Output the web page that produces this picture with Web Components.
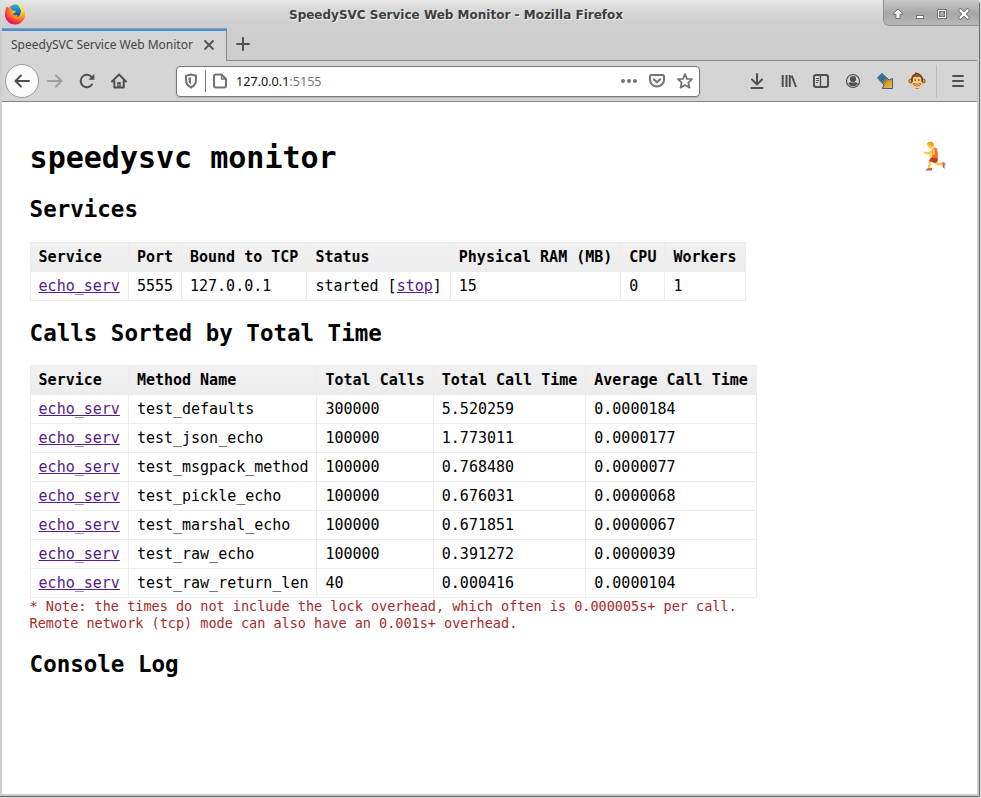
<!DOCTYPE html>
<html lang="en"><head><meta charset="utf-8"><title>SpeedySVC Service Web Monitor</title>
<style>html,body{margin:0;width:981px;height:798px;overflow:hidden;background:#fff}</style></head>
<body><browser-window></browser-window>
<script>
const define=(name,html)=>{const t=document.createElement('template');t.innerHTML=html;
customElements.define(name,class extends HTMLElement{constructor(){super();this.attachShadow({mode:'open'}).append(t.content.cloneNode(true));}});};

const S='fill="none" stroke="#4f4f4f" stroke-width="2" stroke-linecap="round" stroke-linejoin="round"';
const T='fill="none" stroke="#737373" stroke-width="2" stroke-linecap="round" stroke-linejoin="round"';
const icons={
firefox:[22,`<defs><radialGradient id="a" cx=".75" cy=".15" r=".95"><stop offset="0" stop-color="#fff44f"/><stop offset=".35" stop-color="#ffc21c"/><stop offset=".6" stop-color="#ff7a20"/><stop offset=".85" stop-color="#f5224f"/><stop offset="1" stop-color="#d8156b"/></radialGradient><linearGradient id="b" x2="0" y2="1"><stop stop-color="#21b5f5"/><stop offset="1" stop-color="#123fae"/></linearGradient></defs><path d="M2.5 3.5 4.5 5Q7 1 12 1Q20.700 2 21 11A10 10 0 0 1 1 12Q1 7 2.500 3.500Z" fill="url(#a)"/><path d="M7 3.500Q11 0 15 3Q18 6 16.500 10.500Q15 14.500 11 14.500Q6.500 14 6 9Z" fill="url(#b)"/><path d="M2.500 4Q4 6 7 5.500L8.500 7.500 12 8Q11.500 10 9 10.500 9 13 13 12 14 12 13 14Q10 17 6 14 8 18 12 17.500 16.500 16.500 17.500 11 18 6 14 3 21 5 20.800 12 19 21 11 21 3 20 1.300 13Z" fill="url(#a)"/>`],
close:[12,`<path d="M2 2 10 10M10 2 2 10" fill="none" stroke="#555" stroke-width="1.900" stroke-linecap="round"/>`],
plus:[14,`<path d="M7 1V13M1 7H13" ${S}/>`],
back:[16,`<path d="M15 8H1.500M7 2.500 1.500 8 7 13.500" ${S}/>`],
forward:[16,`<path d="M1 8H14.500M9 2.500 14.500 8 9 13.500" fill="none" stroke="#9d9d9d" stroke-width="2" stroke-linecap="round" stroke-linejoin="round"/>`],
reload:[16,`<path d="M13 11.500A6.200 6.200 0 1 1 12.700 4.200" ${S}/><path d="M15.400.8V6.700H9.500Z" fill="#4f4f4f"/>`],
home:[16,`<path d="M1 8.500 8 1.500 15 8.500M3.300 8V14.500H12.700V8" ${S}/><path d="M6.300 14V9H9.700V14Z" fill="#4f4f4f"/><circle cx="8" cy="12" r=".7" fill="#ddd"/>`],
shield:[16,`<path d="M8 1.500 13 2.700V7Q13 12 8 14.500 3 12 3 7V2.700Z" ${T}/><path d="M8 4.300V11.600Q5.500 10 5.500 7V4.800Z" fill="#737373"/>`],
page:[16,`<path d="M9.500 1.500H4Q2 1.500 2 3.500V12.500Q2 14.500 4 14.500H12Q14 14.500 14 12.500V6Z" ${T}/><path d="M9.500 1.800V6H14" ${T} style="stroke-width:1.400"/>`],
dots:[16,`<g fill="#737373"><circle cx="2" cy="8" r="2"/><circle cx="8" cy="8" r="2"/><circle cx="14" cy="8" r="2"/></g>`],
pocket:[16,`<path d="M2.500 2H13.500Q15 2 15 3.500V7A7 6.500 0 0 1 1 7V3.500Q1 2 2.500 2Z" ${T}/><path d="M4.800 6.200 8 9.200 11.200 6.200" ${T}/>`],
star:[16,`<path d="M8 1.200 10 5.800 15 6.200 11.300 9.600 12.500 14.600 8 12 3.500 14.600 4.700 9.600 1 6.200 6 5.800Z" ${T} style="stroke-width:1.800"/>`],
download:[16,`<path d="M8 1V11M3 6.500 8 11.500 13 6.500M2.500 15H13.500" ${S}/>`],
library:[16,`<path d="M1.700 2V14M5.500 2V14M8.800 2V14M10.700 2.700 15 14" ${S} style="stroke-linecap:butt"/>`],
sidebar:[16,`<rect x="1" y="2" width="14" height="12" rx="2" ${S}/><path d="M7.500 2V14" ${S} style="stroke-width:1.400"/><path d="M3 5.500H6M3 7.500H6M3 9.500H5" stroke="#4f4f4f"/>`],
account:[16,`<circle cx="8" cy="8" r="6.500" fill="none" stroke="#4f4f4f" stroke-width="1.200"/><circle cx="8" cy="6" r="3.100" fill="#4f4f4f"/><path d="M3.200 10.500Q5 8.700 6.500 9.500H9.500Q11 8.700 12.800 10.500 11 13.300 8 13.300 5 13.300 3.200 10.500Z" fill="#4f4f4f"/>`],
arrow:[18,`<defs><linearGradient id="c" x2="1" y2="1"><stop stop-color="#237faf"/><stop offset=".4" stop-color="#426f80"/><stop offset=".6" stop-color="#da942a"/><stop offset="1" stop-color="#ffc23f"/></linearGradient></defs><path d="M1.500 5.800 6 1.500 13 8 16.500 6.500V16.500H6.300L8 13Z" fill="url(#c)" stroke="#286a8c" stroke-linejoin="round"/>`],
monkey:[18,`<circle cx="2.900" cy="9" r="2" fill="#e9b56e" stroke="#7e451c"/><circle cx="15.100" cy="9" r="2" fill="#e9b56e" stroke="#7e451c"/><path d="M4 5Q5 2 8 2L7.500.8 11 2Q14 3 14.500 7 16 15 9 16.500 2 15 4 5Z" fill="#995421" stroke="#663611"/><path d="M9 5.200Q11 3.800 13 6 13.500 7.500 13 9.500 16 11 15 13 13 16.500 9 16.500 5 16.500 3 13 2.500 11 5 9.500 4.300 7 5.500 5.500 7 4 9 5.200Z" fill="#f5cd87"/><circle cx="7.200" cy="8" r=".8" fill="#382d24"/><circle cx="10.800" cy="8" r=".8" fill="#382d24"/><path d="M5 11.700Q9 13 13 11.700 12 14 9 14 6 14 5 11.700Z" fill="#fff" stroke="#a43826" stroke-width=".8"/>`],
menu:[16,`<path d="M3 3H13M3 8H13M3 13H13" ${S}/>`],
up:[12,`<path d="M6 .8 11 6.200H8V10.500H4V6.200H1Z" fill="#fff" stroke="#737373" stroke-width="1"/>`],
min:[12,`<rect x="2.500" y="7.500" width="7" height="3" fill="#fff" stroke="#737373"/>`],
max:[12,`<rect x="1.500" y="1.500" width="9" height="9" fill="#fff" stroke="#737373"/><rect x="3.500" y="3.500" width="5" height="5" fill="#aaa" stroke="#737373"/>`],
quit:[12,`<path d="M2.500 2.500 9.500 9.500M9.500 2.500 2.500 9.500" stroke="#737373" stroke-width="4" stroke-linecap="square"/><path d="M2.500 2.500 9.500 9.500M9.500 2.500 2.500 9.500" stroke="#fff" stroke-width="2.200" stroke-linecap="square"/>`],
runner:[32,`<path d="M15 11 11.500 13.500 8 12.500" fill="none" stroke="#ffc83d" stroke-width="2.200" stroke-linecap="round" stroke-linejoin="round"/><path d="M13.500 20 12 28M18 22 20.500 24H26" fill="none" stroke="#ffc83d" stroke-width="2.500" stroke-linecap="round" stroke-linejoin="round"/><path d="M15.500 8.500Q18 6.500 20 8.500 21.500 13 20.800 19.500 17.500 21 14.500 18.500Z" fill="#f3703a"/><path d="M14 17.500 21 18.500Q21 22.500 18 23L12 21Z" fill="#bb3f1c"/><path d="M16.500 9.500 17 13.500 13.500 15.500" fill="none" stroke="#ffc83d" stroke-width="2.200" stroke-linecap="round"/><path d="M10 3.500Q12 .8 15.300 2 17.500 4 16 7.500 13.500 9.500 11.500 7.500 10 6 10 3.500Z" fill="#ffc83d"/><path d="M10 4Q11.500.8 15 2 18 3.800 16.300 6.500 14 4.500 10 4Z" fill="#f79c27"/><path d="M8.500 30Q10.500 28 12.500 28H15V30Z" fill="#dd5a46"/><path d="M8.500 30.500H15" stroke="#aab7c8"/><path d="M25.500 22.500Q28 21.500 28 24.500L27 28.500Q25.500 28 25.500 22.500Z" fill="#dd5a46"/><path d="M28.300 22.500 27.500 28.500" stroke="#aab7c8"/>`]
};
customElements.define('ui-icon',class extends HTMLElement{connectedCallback(){
const [n,d]=icons[this.getAttribute('name')];if(this.shadowRoot)return;
this.attachShadow({mode:'open'}).innerHTML=`<style>:host{display:block;flex:none;width:${n}px;height:${n}px}svg{display:block}</style><svg width="${n}" height="${n}" viewBox="0 0 ${n} ${n}">${d}</svg>`;}});

define('title-bar',`<style>:host{display:grid;grid-template-columns:289px 594px 1fr;height:28px;background:linear-gradient(#e8e8e8,#dadada 8px,#cecece 25px);font:bold 12px "DejaVu Sans",sans-serif;color:#3d3d3d}
.logo{padding:3px 0 0 4px}.title{line-height:30px;height:28px;white-space:nowrap;text-shadow:1px 1px #eee}
.controls{box-sizing:border-box;height:26px;display:flex;align-items:center;gap:10px;padding:3px 0 0 8px;border:1px solid #929292;border-width:0 0 1px 1px;border-radius:0 0 0 6px;background:linear-gradient(#c8c8c8,#a7a7a7 55%,#b9b9b9)}</style>
<div class="logo"><ui-icon name="firefox"></ui-icon></div><div class="title">SpeedySVC Service Web Monitor - Mozilla Firefox</div>
<div class="controls"><ui-icon name="up"></ui-icon><ui-icon name="min"></ui-icon><ui-icon name="max"></ui-icon><ui-icon name="quit"></ui-icon></div>`);

define('tab-bar',`<style>:host{display:flex;height:33px;font:12px "Noto Sans",sans-serif;color:#444;background:#cecece}
.tab{box-sizing:border-box;width:225px;padding-left:9px;border-top:1px solid #9a9a9a;border-right:1px solid #8b8b8b;background:linear-gradient(#4190e2 2px,#d5d5d5 2px);display:flex;align-items:center;gap:10px;height:33px}
.tab span{white-space:nowrap;width:182px;line-height:28px;padding-bottom:1px}.tab ui-icon{margin-bottom:1px}.rest{flex:1;border-bottom:1px solid #8b8b8b;padding:9px 0 0 9px}</style>
<div class="tab"><span>SpeedySVC Service Web Monitor</span><ui-icon name="close"></ui-icon></div><div class="rest"><ui-icon name="plus"></ui-icon></div>`);

define('nav-bar',`<style>:host{box-sizing:border-box;display:flex;align-items:center;height:41px;background:#d5d5d5;border-bottom:1px solid #858585;padding-left:3px;font:12.600px "Noto Sans",sans-serif}
.back{box-sizing:border-box;width:34px;height:34px;border:1px solid #999;border-radius:50%;background:#fafafa;display:grid;place-items:center}
.left{display:flex;gap:16px;margin-left:8px;width:129px}
.url{box-sizing:border-box;width:524px;height:31px;border:1px solid #777;border-radius:4px;background:#fff;display:flex;align-items:center;padding:0 6px;box-shadow:0 1px 2px #0002}
.line{width:1px;height:22px;background:#777;margin:0 6px}.addr{flex:1;margin-left:8px;color:#777;white-space:nowrap}.addr b{font-weight:400;color:#111}
.actions{display:flex;gap:12px}.right{display:flex;align-items:center;gap:16px;margin-left:49px}.sep{width:1px;height:33px;background:#bbb;margin:0 -3px 0 -5px}
.wide{margin:0 -1px}</style>
<div class="back"><ui-icon name="back"></ui-icon></div><div class="left"><ui-icon name="forward"></ui-icon><ui-icon name="reload"></ui-icon><ui-icon name="home"></ui-icon></div>
<div class="url"><ui-icon name="shield"></ui-icon><i class="line"></i><ui-icon name="page"></ui-icon><span class="addr"><b>127.0.0.1</b>:5155</span><div class="actions"><ui-icon name="dots"></ui-icon><ui-icon name="pocket"></ui-icon><ui-icon name="star"></ui-icon></div></div>
<div class="right"><ui-icon name="download"></ui-icon><ui-icon name="library"></ui-icon><ui-icon name="sidebar"></ui-icon><ui-icon name="account"></ui-icon><ui-icon class="wide" name="arrow"></ui-icon><ui-icon class="wide" name="monkey"></ui-icon><i class="sep"></i><ui-icon name="menu"></ui-icon></div>`);

customElements.define('data-table',class extends HTMLElement{connectedCallback(){
const rows=this.textContent.trim().split('\n').map(r=>r.trim().split('|'));
const cell=s=>s.replace(/\{(.+?)\}/g,'<a>$1</a>');
this.attachShadow({mode:'open'}).innerHTML=`<style>:host{display:block}table{border-collapse:collapse;font:15px "DejaVu Sans Mono",monospace}td,th{box-sizing:border-box;height:29px;padding:0 8px;line-height:18px;border:1px solid #ececec;text-align:left;white-space:nowrap}th{font-weight:bold}thead{background:linear-gradient(#f1f1f1,#ececec)}a{color:#551a8b;text-decoration:underline}</style><table><thead><tr>${rows[0].map(x=>`<th>${x}</th>`).join('')}</tr></thead><tbody>${rows.slice(1).map(r=>`<tr>${r.map(x=>`<td>${cell(x)}</td>`).join('')}</tr>`).join('')}</tbody></table>`;}});

define('monitor-page',`<style>:host{box-sizing:border-box;display:flow-root;background:#fff;color:#000;font:15px "DejaVu Sans Mono",monospace;padding:38px 28px 0 27.600px;overflow:hidden}
header{display:flex;justify-content:space-between;height:35px}h1{margin:0;font-size:30px;line-height:35px}h2{margin:0;font-size:22.500px;line-height:26px}
.s{margin-top:21px}.t1{margin-top:20px;height:59px}.c{margin-top:19px}.t2{margin-top:19px;height:233px}.note{margin:0;color:#a52a2a;font-size:13.500px;line-height:17px}.l{margin-top:19px}</style>
<header><h1>speedysvc monitor</h1><ui-icon name="runner"></ui-icon></header>
<h2 class="s">Services</h2>
<data-table class="t1">Service|Port|Bound to TCP|Status|Physical RAM (MB)|CPU|Workers
{echo_serv}|5555|127.0.0.1|started [{stop}]|15|0|1</data-table>
<h2 class="c">Calls Sorted by Total Time</h2>
<data-table class="t2">Service|Method Name|Total Calls|Total Call Time|Average Call Time
{echo_serv}|test_defaults|300000|5.520259|0.0000184
{echo_serv}|test_json_echo|100000|1.773011|0.0000177
{echo_serv}|test_msgpack_method|100000|0.768480|0.0000077
{echo_serv}|test_pickle_echo|100000|0.676031|0.0000068
{echo_serv}|test_marshal_echo|100000|0.671851|0.0000067
{echo_serv}|test_raw_echo|100000|0.391272|0.0000039
{echo_serv}|test_raw_return_len|40|0.000416|0.0000104</data-table>
<p class="note">* Note: the times do not include the lock overhead, which often is 0.000005s+ per call.<br>Remote network (tcp) mode can also have an 0.001s+ overhead.</p>
<h2 class="l">Console Log</h2>`);

define('browser-window',`<style>:host{display:block;width:981px;height:798px;background:linear-gradient(#ddd,#ddd 796px,#ccc 797px,#eee)}
.win{box-sizing:border-box;width:980px;height:797px;border:solid #696969;border-width:0 1px 1px 0;border-radius:5px 5px 2px 0;overflow:hidden;background:#cdcdcd;display:grid;grid-template-rows:28px 33px 41px 692px}
tab-bar,nav-bar,monitor-page{margin:0 2px}</style>
<div class="win"><title-bar></title-bar><tab-bar></tab-bar><nav-bar></nav-bar><monitor-page></monitor-page></div>`);
</script></body></html>
